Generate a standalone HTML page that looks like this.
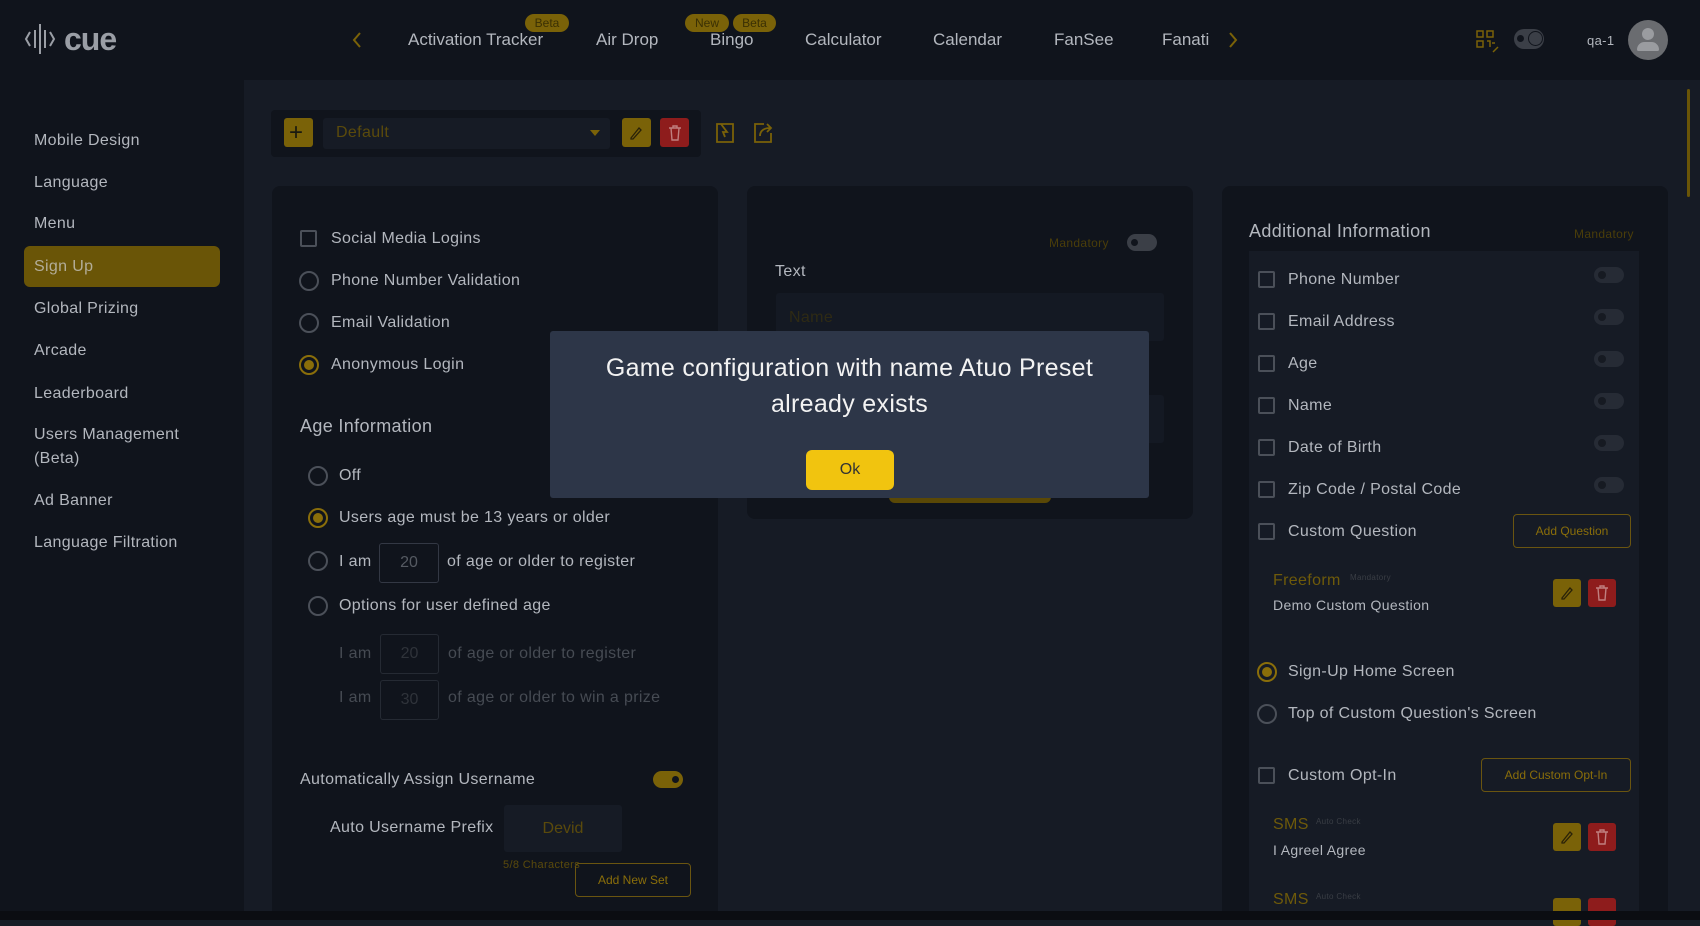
<!DOCTYPE html>
<html><head><meta charset="utf-8"><style>
*{margin:0;padding:0;box-sizing:border-box}
body{width:1700px;height:920px;overflow:hidden;background:#161b25;font-family:"Liberation Sans",sans-serif;color:#b3b7be;position:relative}
.a{position:absolute}
.t{position:absolute;line-height:20px;font-size:16px;white-space:nowrap;letter-spacing:.35px}
.cb{position:absolute;width:17px;height:17px;border:2px solid #4b5059;border-radius:2px}
.rd{position:absolute;width:20px;height:20px;border:2px solid #4b5059;border-radius:50%}
.rd.on{border-color:#8a6e0a}
.rd.on::after{content:"";position:absolute;left:3px;top:3px;width:10px;height:10px;border-radius:50%;background:#8a6e0a}
.tg{position:absolute;width:30px;height:16px;border-radius:8px;background:#262b35}
.tg::after{content:"";position:absolute;left:4px;top:4px;width:8px;height:8px;border-radius:50%;background:#161a22}
.btn-o{position:absolute;border:1px solid #6a5510;border-radius:4px;color:#8a6e0a;font-size:12px;text-align:center}
.ic{position:absolute;width:28px;height:28px;border-radius:3px}
.badge{position:absolute;background:#7a6208;color:#3a3004;font-size:12px;border-radius:9px;text-align:center;line-height:18px;height:18px}
.nav{position:absolute;top:30px;font-size:17px;color:#b3b7be;line-height:20px}
.dim{color:#464b53}
</style></head><body>
<!-- header -->
<div class="a" style="left:0;top:0;width:1700px;height:80px;background:#10141c"></div>
<svg class="a" style="left:24px;top:22px" width="36" height="34" viewBox="0 0 36 34"><g stroke="#9a9ea5" stroke-width="2" fill="none"><path d="M6 10 L2 17 L6 24"/><path d="M11 8 V26"/><path d="M16 2 V32"/><path d="M21 8 V26"/><path d="M26 10 L30 17 L26 24"/></g></svg>
<div class="t" style="left:64px;top:23px;font-size:32px;line-height:32px;font-weight:bold;color:#9a9ea5;letter-spacing:-1px">cue</div>
<svg class="a" style="left:351px;top:31px" width="12" height="18"><path d="M9 2 L3 9 L9 16" stroke="#7a6208" stroke-width="2" fill="none"/></svg>
<div class="nav" style="left:408px">Activation Tracker</div>
<div class="badge" style="left:525px;top:14px;width:44px">Beta</div>
<div class="nav" style="left:596px">Air Drop</div>
<div class="nav" style="left:710px">Bingo</div>
<div class="badge" style="left:685px;top:14px;width:44px">New</div>
<div class="badge" style="left:733px;top:14px;width:43px">Beta</div>
<div class="nav" style="left:805px">Calculator</div>
<div class="nav" style="left:933px">Calendar</div>
<div class="nav" style="left:1054px">FanSee</div>
<div class="nav" style="left:1162px">Fanati</div>
<svg class="a" style="left:1227px;top:31px" width="12" height="18"><path d="M3 2 L9 9 L3 16" stroke="#7a6208" stroke-width="2" fill="none"/></svg>
<svg class="a" style="left:1476px;top:30px" width="28" height="26"><g stroke="#7a6208" stroke-width="1.5" fill="none"><rect x="1" y="1" width="6" height="6"/><rect x="11" y="1" width="6" height="6"/><rect x="1" y="11" width="6" height="6"/><path d="M11 11 H14 V17 M16 13 H19"/><path d="M17 22 L22 17"/></g></svg>
<div class="a" style="left:1514px;top:29px;width:30px;height:20px;border-radius:10px;background:#3b3f47"></div>
<div class="a" style="left:1517px;top:35px;width:7px;height:7px;border-radius:50%;background:#10141c"></div>
<div class="a" style="left:1528px;top:31px;width:15px;height:15px;border-radius:50%;border:1.5px solid #10141c"></div>
<div class="t" style="left:1587px;top:31px;font-size:13px">qa-1</div>
<div class="a" style="left:1628px;top:20px;width:40px;height:40px;border-radius:50%;background:#6a6c70"></div>
<div class="a" style="left:1642px;top:28px;width:12px;height:12px;border-radius:50%;background:#9a9ca0"></div>
<div class="a" style="left:1637px;top:42px;width:22px;height:9px;border-radius:10px 10px 2px 2px;background:#9a9ca0"></div>

<!-- sidebar -->
<div class="a" style="left:0;top:80px;width:244px;height:840px;background:#10141c"></div>
<div class="a" style="left:24px;top:246px;width:196px;height:41px;border-radius:6px;background:#6a5507"></div>
<div class="t" style="left:34px;top:131px">Mobile Design</div>
<div class="t" style="left:34px;top:173px">Language</div>
<div class="t" style="left:34px;top:214px">Menu</div>
<div class="t" style="left:34px;top:257px;color:#b3ad98">Sign Up</div>
<div class="t" style="left:34px;top:299px">Global Prizing</div>
<div class="t" style="left:34px;top:341px">Arcade</div>
<div class="t" style="left:34px;top:384px">Leaderboard</div>
<div class="t" style="left:34px;top:425px">Users Management</div>
<div class="t" style="left:34px;top:449px">(Beta)</div>
<div class="t" style="left:34px;top:491px">Ad Banner</div>
<div class="t" style="left:34px;top:533px">Language Filtration</div>

<!-- toolbar -->
<div class="a" style="left:271px;top:110px;width:430px;height:47px;background:#10141c;border-radius:4px"></div>
<div class="ic" style="left:284px;top:118px;width:29px;height:29px;background:#7a6208"></div>
<div class="t" style="left:289px;top:121px;font-size:24px;line-height:24px;color:#1a1a10">+</div>
<div class="a" style="left:323px;top:118px;width:287px;height:31px;background:#161b25;border-radius:3px"></div>
<div class="t" style="left:336px;top:123px;color:#5a4a0c">Default</div>
<div class="a" style="left:590px;top:130px;border-left:5px solid transparent;border-right:5px solid transparent;border-top:6px solid #7a6208"></div>
<div class="ic" style="left:622px;top:118px;width:29px;height:29px;background:#7a6208"></div>
<svg class="a" style="left:628px;top:125px" width="16" height="16"><path d="M3 13 L11 3 L13 5 L5 14 L3 14 Z" stroke="#2a2208" stroke-width="1.3" fill="none"/></svg>
<div class="ic" style="left:660px;top:118px;width:29px;height:29px;background:#8e1c1c"></div>
<svg class="a" style="left:667px;top:124px" width="16" height="18"><g stroke="#c08080" stroke-width="1.4" fill="none"><path d="M2 4 H14 M6 4 V2 H10 V4 M4 4 L5 16 H11 L12 4"/></g></svg>
<svg class="a" style="left:714px;top:121px" width="22" height="24"><g stroke="#7a6208" stroke-width="1.8" fill="none"><path d="M3 3 H19 V21 H3 Z"/><path d="M7 3 L13 11 L9 11 L11 16"/></g></svg>
<svg class="a" style="left:752px;top:121px" width="22" height="24"><g stroke="#7a6208" stroke-width="1.8" fill="none"><path d="M12 3 H3 V21 H19 V12"/><path d="M8 15 C8 9 13 7 18 7 M15 3 L19 7 L15 11"/></g></svg>

<!-- left panel -->
<div class="a" style="left:272px;top:186px;width:446px;height:734px;background:#10141c;border-radius:8px"></div>
<div class="cb" style="left:300px;top:230px"></div>
<div class="t" style="left:331px;top:229px">Social Media Logins</div>
<div class="rd" style="left:299px;top:271px"></div>
<div class="t" style="left:331px;top:271px">Phone Number Validation</div>
<div class="rd" style="left:299px;top:313px"></div>
<div class="t" style="left:331px;top:313px">Email Validation</div>
<div class="rd on" style="left:299px;top:355px"></div>
<div class="t" style="left:331px;top:355px">Anonymous Login</div>
<div class="t" style="left:300px;top:416px;font-size:18px">Age Information</div>
<div class="rd" style="left:308px;top:466px"></div>
<div class="t" style="left:339px;top:466px">Off</div>
<div class="rd on" style="left:308px;top:508px"></div>
<div class="t" style="left:339px;top:508px">Users age must be 13 years or older</div>
<div class="rd" style="left:308px;top:551px"></div>
<div class="t" style="left:339px;top:552px">I am</div>
<div class="a" style="left:379px;top:543px;width:60px;height:40px;border:1px solid #333844;border-radius:3px;color:#555a62;text-align:center;line-height:38px;font-size:16px">20</div>
<div class="t" style="left:447px;top:552px">of age or older to register</div>
<div class="rd" style="left:308px;top:596px"></div>
<div class="t" style="left:339px;top:596px">Options for user defined age</div>
<div class="t dim" style="left:339px;top:644px">I am</div>
<div class="a" style="left:380px;top:634px;width:59px;height:40px;border:1px solid #252a33;border-radius:3px;color:#2f333a;text-align:center;line-height:38px;font-size:16px">20</div>
<div class="t dim" style="left:448px;top:644px">of age or older to register</div>
<div class="t dim" style="left:339px;top:688px">I am</div>
<div class="a" style="left:380px;top:680px;width:59px;height:40px;border:1px solid #252a33;border-radius:3px;color:#2f333a;text-align:center;line-height:38px;font-size:16px">30</div>
<div class="t dim" style="left:448px;top:688px">of age or older to win a prize</div>
<div class="t" style="left:300px;top:770px">Automatically Assign Username</div>
<div class="a" style="left:653px;top:771px;width:30px;height:17px;border-radius:9px;background:#7a6208"></div>
<div class="a" style="left:672px;top:776px;width:7px;height:7px;border-radius:50%;background:#10141c"></div>
<div class="t" style="left:330px;top:818px">Auto Username Prefix</div>
<div class="a" style="left:504px;top:805px;width:118px;height:47px;background:#161b25;border-radius:3px;color:#5a4a0c;text-align:center;line-height:47px;font-size:16px">Devid</div>
<div class="t" style="left:503px;top:855px;font-size:11px;color:#5a4a0c">5/8 Characters</div>
<div class="btn-o" style="left:575px;top:863px;width:116px;height:34px;line-height:32px">Add New Set</div>

<!-- middle panel -->
<div class="a" style="left:747px;top:186px;width:446px;height:333px;background:#10141c;border-radius:8px"></div>
<div class="t" style="left:1049px;top:233px;font-size:12px;color:#4a3d0a">Mandatory</div>
<div class="a" style="left:1127px;top:234px;width:30px;height:17px;border-radius:9px;background:#3b3f47"></div>
<div class="a" style="left:1131px;top:239px;width:7px;height:7px;border-radius:50%;background:#10141c"></div>
<div class="t" style="left:775px;top:262px">Text</div>
<div class="a" style="left:776px;top:293px;width:388px;height:48px;background:#141923;border-radius:3px"></div>
<div class="t" style="left:789px;top:308px;color:#2e2a14">Name</div>
<div class="a" style="left:776px;top:395px;width:388px;height:48px;background:#141923;border-radius:3px"></div>
<div class="a" style="left:889px;top:480px;width:162px;height:23px;background:#5a4806;border-radius:6px"></div>

<!-- right panel -->
<div class="a" style="left:1222px;top:186px;width:446px;height:734px;background:#10141c;border-radius:8px"></div>
<div class="t" style="left:1249px;top:221px;font-size:18px">Additional Information</div>
<div class="t" style="left:1574px;top:224px;font-size:12px;color:#4a3d0a">Mandatory</div>
<div class="a" style="left:1249px;top:251px;width:390px;height:669px;background:#161b25"></div>
<div class="cb" style="left:1258px;top:271px"></div><div class="t" style="left:1288px;top:270px">Phone Number</div><div class="tg" style="left:1594px;top:267px"></div>
<div class="cb" style="left:1258px;top:313px"></div><div class="t" style="left:1288px;top:312px">Email Address</div><div class="tg" style="left:1594px;top:309px"></div>
<div class="cb" style="left:1258px;top:355px"></div><div class="t" style="left:1288px;top:354px">Age</div><div class="tg" style="left:1594px;top:351px"></div>
<div class="cb" style="left:1258px;top:397px"></div><div class="t" style="left:1288px;top:396px">Name</div><div class="tg" style="left:1594px;top:393px"></div>
<div class="cb" style="left:1258px;top:439px"></div><div class="t" style="left:1288px;top:438px">Date of Birth</div><div class="tg" style="left:1594px;top:435px"></div>
<div class="cb" style="left:1258px;top:481px"></div><div class="t" style="left:1288px;top:480px">Zip Code / Postal Code</div><div class="tg" style="left:1594px;top:477px"></div>
<div class="cb" style="left:1258px;top:523px"></div><div class="t" style="left:1288px;top:522px">Custom Question</div>
<div class="btn-o" style="left:1513px;top:514px;width:118px;height:34px;line-height:32px">Add Question</div>
<div class="t" style="left:1273px;top:571px;color:#6e5a0a">Freeform</div>
<div class="t" style="left:1350px;top:568px;font-size:8px;color:#3a3e45">Mandatory</div>
<div class="t" style="left:1273px;top:595px;font-size:14px">Demo Custom Question</div>
<div class="ic" style="left:1553px;top:579px;background:#7a6208"></div>
<svg class="a" style="left:1559px;top:585px" width="16" height="16"><path d="M3 13 L11 3 L13 5 L5 14 L3 14 Z" stroke="#2a2208" stroke-width="1.3" fill="none"/></svg>
<div class="ic" style="left:1588px;top:579px;background:#8e1c1c"></div>
<svg class="a" style="left:1594px;top:584px" width="16" height="18"><path d="M2 4 H14 M6 4 V2 H10 V4 M4 4 L5 16 H11 L12 4" stroke="#c08080" stroke-width="1.4" fill="none"/></svg>
<div class="rd on" style="left:1257px;top:662px"></div><div class="t" style="left:1288px;top:662px">Sign-Up Home Screen</div>
<div class="rd" style="left:1257px;top:704px"></div><div class="t" style="left:1288px;top:704px">Top of Custom Question's Screen</div>
<div class="cb" style="left:1258px;top:767px"></div><div class="t" style="left:1288px;top:766px">Custom Opt-In</div>
<div class="btn-o" style="left:1481px;top:758px;width:150px;height:34px;line-height:32px">Add Custom Opt-In</div>
<div class="t" style="left:1273px;top:815px;color:#6e5a0a">SMS</div>
<div class="t" style="left:1316px;top:812px;font-size:8px;color:#3a3e45">Auto Check</div>
<div class="t" style="left:1273px;top:840px;font-size:14px">I Agreel Agree</div>
<div class="ic" style="left:1553px;top:823px;background:#7a6208"></div>
<svg class="a" style="left:1559px;top:829px" width="16" height="16"><path d="M3 13 L11 3 L13 5 L5 14 L3 14 Z" stroke="#2a2208" stroke-width="1.3" fill="none"/></svg>
<div class="ic" style="left:1588px;top:823px;background:#8e1c1c"></div>
<svg class="a" style="left:1594px;top:828px" width="16" height="18"><path d="M2 4 H14 M6 4 V2 H10 V4 M4 4 L5 16 H11 L12 4" stroke="#c08080" stroke-width="1.4" fill="none"/></svg>
<div class="t" style="left:1273px;top:890px;color:#6e5a0a">SMS</div>
<div class="t" style="left:1316px;top:887px;font-size:8px;color:#3a3e45">Auto Check</div>
<div class="ic" style="left:1553px;top:898px;background:#7a6208"></div>
<div class="ic" style="left:1588px;top:898px;background:#8e1c1c"></div>

<!-- scrollbar -->
<div class="a" style="left:1687px;top:89px;width:3px;height:108px;background:#6a5507;border-radius:2px"></div>
<!-- bottom strip -->
<div class="a" style="left:0;top:911px;width:1700px;height:9px;background:#0b0d12"></div>

<!-- modal -->
<div class="a" style="left:550px;top:331px;width:599px;height:167px;background:#2d3648;border-radius:3px"></div>
<div class="a" style="left:550px;top:350px;width:599px;text-align:center;color:#f2f2f2;font-size:25px;line-height:36px;letter-spacing:.3px">Game configuration with name Atuo Preset<br>already exists</div>
<div class="a" style="left:806px;top:450px;width:88px;height:40px;background:#f1c40f;border-radius:6px;color:#333;font-size:16px;text-align:center;line-height:40px">Ok</div>
</body></html>
